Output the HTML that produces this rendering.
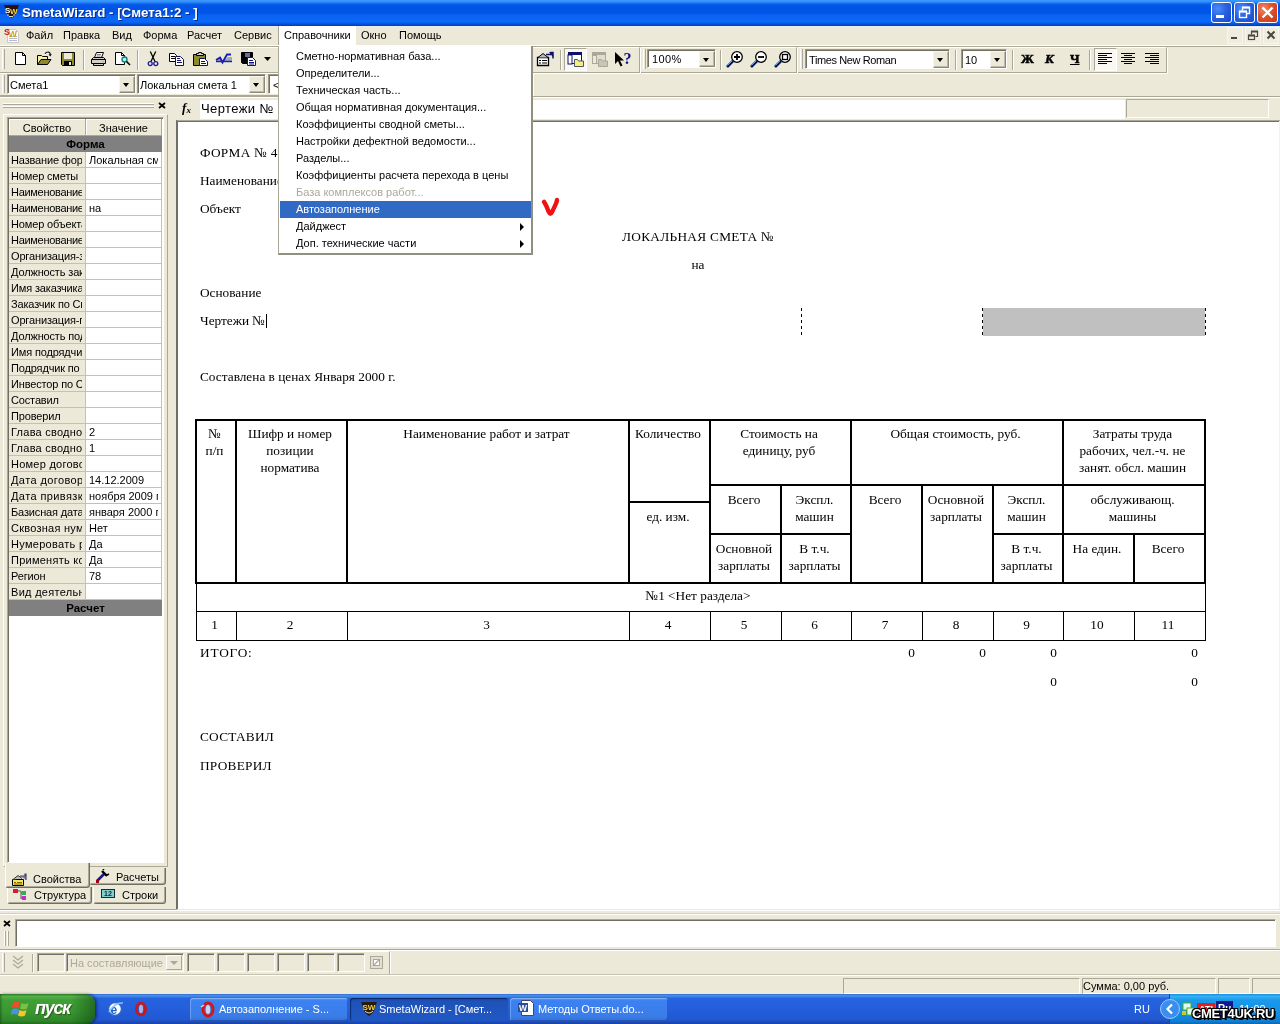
<!DOCTYPE html>
<html lang="ru">
<head>
<meta charset="utf-8">
<title>SmetaWizard - [Смета1:2 - ]</title>
<style>
*{box-sizing:border-box;margin:0;padding:0}
html,body{width:1280px;height:1024px;overflow:hidden;background:#ece9d8}
body{position:relative;will-change:transform;font:11px "Liberation Sans",sans-serif;color:#000}
.abs{position:absolute}
.t{position:absolute;white-space:nowrap;line-height:13px}
/* title bar */
#title{left:0;top:0;width:1280px;height:26px;background:linear-gradient(to bottom,#3c9aff 0%,#2f8cfa 8%,#0c60ea 15%,#0055e6 24%,#0055e6 50%,#0a64f4 60%,#0b68f8 84%,#0752dc 92%,#003cb4 100%)}
#title .cap{left:22px;top:5px;font:bold 13.3px "Liberation Sans",sans-serif;color:#fff;text-shadow:1px 1px 0 #0a2a8a;line-height:16px}
/* menu bar */
#menubar{left:0;top:26px;width:1280px;height:20px;background:#ece9d8}
#menubar .t{top:3px}
/* toolbars */
.sep{position:absolute;width:2px;border-left:1px solid #aca899;border-right:1px solid #fff}
.combo{position:absolute;background:#fff;border:1px solid #9d9a8a;border-right-color:#fff;border-bottom-color:#fff;box-shadow:inset 1px 1px 0 #716f64}
.combo .btn{position:absolute;right:0;top:1px;bottom:0;width:16px;background:#ece9d8;border:1px solid #f6f5ee;border-right-color:#8a887a;border-bottom-color:#8a887a;box-shadow:inset -1px -1px 0 #bdb9a8}
.combo .btn:after{content:"";position:absolute;left:3px;top:6px;border:3.5px solid transparent;border-top:4px solid #000;border-bottom:0}
.combo .t{left:3px;top:3px}

.tb{border-top:1px solid #fff;border-bottom:1px solid #aca899;border-right:1px solid #aca899;box-shadow:1px 1px 0 #fff}
.grip{width:3px;border-left:1px solid #fff;border-right:1px solid #aca899;background:#ece9d8}
.ic{overflow:visible}

#grid{overflow:hidden;font-size:11px}
#grid div{position:absolute;white-space:nowrap;overflow:hidden}
.gcol{left:0;top:0;width:76px;height:497px;background:#ece9d8}
.gh{top:0;height:17px;line-height:18px;text-align:center;background:#ece9d8;border-right:1px solid #aca899;border-bottom:1px solid #aca899;box-shadow:inset 1px 1px 0 #fff}
.gs{left:0;width:153px;height:16px;line-height:16px;background:#808080;font-weight:bold;text-align:center;font-size:11.500px}
.gl{left:2px;width:71px;height:15px;line-height:17px;letter-spacing:-.15px}
.gr{left:80px;width:69px;height:15px;line-height:17px}
.hl{left:0;width:153px;height:1px;background:#c0c0c0}
.vl{top:33px;width:1px;height:448px;background:#c0c0c0}
.hl{left:0;width:153px;height:1px;background:#c0c0c0}
.vl{top:33px;width:1px;height:448px;background:#c0c0c0}
.hl{left:0;width:153px;height:1px;background:#c0c0c0}
.vl{top:33px;width:1px;height:448px;background:#c0c0c0}
.hl{left:0;width:153px;height:1px;background:#c0c0c0}
.vl{top:33px;width:1px;height:448px;background:#c0c0c0}
.hl{left:0;width:153px;height:1px;background:#c0c0c0}
.vl{top:33px;width:1px;height:448px;background:#c0c0c0}
.hl{left:0;width:153px;height:1px;background:#c0c0c0}
.vl{top:33px;width:1px;height:448px;background:#c0c0c0}
.hl{left:0;width:153px;height:1px;background:#c0c0c0}
.vl{top:33px;width:1px;height:448px;background:#c0c0c0}
.tab{background:#ece9d8;border:1px solid #fff;border-top:0;border-right:1px solid #716f64;border-bottom:1px solid #716f64;border-radius:0 0 3px 3px;box-shadow:inset -1px -1px 0 #aca899}
.tab.act{z-index:0}

.d{position:absolute;white-space:nowrap;font:13.300px "Liberation Serif",serif;line-height:16px;height:16px}
.d.c{text-align:center}
.d.r{text-align:right}
.ln{position:absolute;background:#000}

.mi{position:absolute;left:1px;width:251px;height:17px;line-height:17px;padding-left:16px;white-space:nowrap}
.mi.dis{color:#aca899}
.mi.sel{background:#316ac5;color:#fff}
.mi i{position:absolute;left:240px;top:5px;border:4px solid transparent;border-left:4px solid #000;border-right:0;height:0;width:0}

.sunk{position:absolute;border:1px solid #aca899;border-right-color:#fff;border-bottom-color:#fff;box-shadow:inset 1px 1px 0 #716f64}
.spn{position:absolute;top:978px;height:16px;border:1px solid #aca899;border-right-color:#fff;border-bottom-color:#fff}
#taskbar{background:linear-gradient(to bottom,#3168d5 0%,#4993e6 6%,#2663e0 14%,#245edb 50%,#2158d3 85%,#1941a5 100%)}
#start{background:linear-gradient(to right,rgba(0,40,0,.35) 0%,rgba(0,40,0,0) 3%,rgba(0,40,0,0) 75%,rgba(0,40,0,.4) 100%),linear-gradient(to bottom,#2c7a24 0%,#54b04a 8%,#40a036 20%,#399632 60%,#2f8629 90%,#246a20 100%);border-radius:0 9px 9px 0;box-shadow:2px 0 3px rgba(0,0,60,.5)}
.tbtn{position:absolute;top:4px;width:158px;height:23px;border-radius:3px;background:linear-gradient(to bottom,#5c9bf0 0%,#3c81f3 12%,#3a7de8 80%,#336fd6 100%);box-shadow:inset 1px 1px 0 rgba(255,255,255,.25),inset -1px -1px 0 rgba(0,0,60,.25)}
.tbtn.on{background:linear-gradient(to bottom,#1a45a8 0%,#1e52b7 15%,#2058c4 100%);box-shadow:inset 1px 1px 1px rgba(0,0,40,.5)}
#tray{background:linear-gradient(to bottom,#1a8ee0 0%,#35b0f5 8%,#1b9aeb 20%,#1290e6 60%,#0f80d4 90%,#0b66b0 100%);border-left:1px solid #0a4a9a}
#wm{font:bold 13px "Liberation Sans",sans-serif;color:#fff;line-height:16px;text-shadow:-1px -1px 0 #000,1px -1px 0 #000,-1px 1px 0 #000,1px 1px 0 #000,0 -1px 0 #000,0 1px 0 #000,-1px 0 0 #000,1px 0 0 #000,2px 2px 0 #000;letter-spacing:-.3px}

.wb{position:absolute;top:2px;width:21px;height:21px;border:1px solid #fff;border-radius:3px;background:radial-gradient(circle at 30% 30%,#4a8cf8 0%,#2a62e0 45%,#1a48c8 100%)}
.wb.cl{background:radial-gradient(circle at 30% 30%,#f08a6a 0%,#e0502a 45%,#c03a18 100%)}
.wb svg{display:block}
</style>
</head>
<body>
<!-- TITLE BAR -->
<div id="title" class="abs">
  <svg class="abs" style="left:4px;top:5px" width="15" height="13" viewBox="0 0 15 13"><path d="M0 0h15l-1.500 4q-.5 5-6 9q-5.500-4-6-9z" fill="#2a1208"/><text x="1" y="7.500" font-family="Liberation Sans,sans-serif" font-weight="bold" font-size="8" fill="#fff">S</text><text x="6" y="8.500" font-family="Liberation Sans,sans-serif" font-weight="bold" font-size="8" fill="#f2d648">W</text><path d="M3 10h2M9 10h2M5 11.500h4" stroke="#e8d8b0" stroke-width="1"/></svg>
  <div class="t cap">SmetaWizard - [Смета1:2 - ]</div>
  <div class="wb" style="left:1211px"><svg width="19" height="19" viewBox="0 0 19 19"><rect x="4" y="12" width="8" height="3" fill="#fff"/></svg></div>
  <div class="wb" style="left:1234px"><svg width="19" height="19" viewBox="0 0 19 19"><path d="M7.500 7.500v-3h7v6h-3" fill="none" stroke="#fff" stroke-width="1.400"/><path d="M7 4.500h8" stroke="#fff" stroke-width="2"/><rect x="4.500" y="8.500" width="7" height="6" fill="none" stroke="#fff" stroke-width="1.400"/><path d="M4 8.500h8" stroke="#fff" stroke-width="2"/></svg></div>
  <div class="wb cl" style="left:1257px"><svg width="19" height="19" viewBox="0 0 19 19"><path d="M4.500 4.500l10 10M14.500 4.500l-10 10" stroke="#fff" stroke-width="2.300"/></svg></div>
</div>
<!-- MENU BAR -->
<div id="menubar" class="abs">
  <div class="abs" style="left:0;top:0;width:1280px;height:1px;background:#e6ecfa"></div>
  <svg class="abs" style="left:4px;top:1px" width="16" height="17" viewBox="0 0 16 17"><path d="M3.500 2.500h8l3 3v10h-11z" fill="#fff" stroke="#c8c8d0"/><path d="M5 9.500h8M5 11.500h8M5 13.500h8" stroke="#b8b8c8"/><text x="0" y="8" font-family="Liberation Sans,sans-serif" font-weight="bold" font-size="9" fill="#c01818">S</text><text x="4.500" y="10" font-family="Liberation Sans,sans-serif" font-weight="bold" font-size="9" fill="#c8a818">W</text></svg>
  <svg class="abs" style="left:1227px;top:1px" width="52" height="17" viewBox="0 0 52 17"><rect x=".5" y=".5" width="15" height="16" fill="#efece0" stroke="#f7f6ef"/><rect x="18.500" y=".5" width="15" height="16" fill="#efece0" stroke="#f7f6ef"/><rect x="36.500" y=".5" width="15" height="16" fill="#efece0" stroke="#f7f6ef"/><path d="M4 11h6" stroke="#4a483c" stroke-width="2"/><path d="M24.500 7.500v-3h6v5h-2" fill="none" stroke="#4a483c" stroke-width="1.200"/><path d="M24 4.500h7" stroke="#4a483c" stroke-width="2"/><rect x="21.500" y="8.500" width="6" height="4" fill="none" stroke="#4a483c" stroke-width="1.200"/><path d="M21 8.500h7" stroke="#4a483c" stroke-width="2"/><path d="M40.500 4.500l7 7M47.500 4.500l-7 7" stroke="#4a483c" stroke-width="2"/></svg>
  <div class="t" style="left:26px">Файл</div>
  <div class="t" style="left:63px">Правка</div>
  <div class="t" style="left:112px">Вид</div>
  <div class="t" style="left:143px">Форма</div>
  <div class="t" style="left:187px">Расчет</div>
  <div class="t" style="left:234px">Сервис</div>
  <div class="abs" style="left:278px;top:0;width:78px;height:21px;background:#fff;border-left:1px solid #aca899"></div>
  <div class="t" style="left:284px">Справочники</div>
  <div class="t" style="left:361px">Окно</div>
  <div class="t" style="left:399px">Помощь</div>
</div>
<!--TOOLBARS-->
<!-- TOOLBAR ROW 1 -->
<div class="abs" style="left:0;top:45px;width:1280px;height:1px;background:#fff"></div>
<div class="abs" style="left:0;top:46px;width:1280px;height:1px;background:#aca899"></div>
<!-- toolbar 1 band -->
<div class="abs tb" style="left:0;top:47px;width:640px;height:26px"></div>
<div class="abs tb" style="left:641px;top:47px;width:156px;height:26px"></div>
<div class="abs tb" style="left:798px;top:47px;width:369px;height:26px"></div>
<div class="abs grip" style="left:2px;top:49px;height:20px"></div>
<div class="abs grip" style="left:643px;top:49px;height:20px"></div>
<div class="abs grip" style="left:800px;top:49px;height:20px"></div>
<div class="sep" style="left:83px;top:50px;height:20px"></div>
<div class="sep" style="left:137px;top:50px;height:20px"></div>
<div class="sep" style="left:560px;top:50px;height:20px"></div>
<div class="sep" style="left:720px;top:50px;height:20px"></div>
<div class="sep" style="left:955px;top:50px;height:20px"></div>
<div class="sep" style="left:1012px;top:50px;height:20px"></div>
<div class="sep" style="left:1089px;top:50px;height:20px"></div>

<!-- icons row 1 -->
<svg class="abs ic" style="left:13px;top:51px" width="16" height="16" viewBox="0 0 16 16"><path d="M2.5 1.5h7l3 3v9h-10z" fill="#fff" stroke="#000"/><path d="M9.5 1.5v3h3" fill="none" stroke="#000"/></svg>
<svg class="abs ic" style="left:36px;top:50px" width="16" height="16" viewBox="0 0 16 16"><path d="M1.5 14.5v-9h4l1 1h5v3" fill="#f5f0a0" stroke="#000"/><path d="M1.5 14.5l3.500-5h10l-3.500 5z" fill="#8c8a2c" stroke="#000"/><path d="M9 3.600q1.200-1.600 3-1.600q2.200 0 2.300 2.600" fill="none" stroke="#000" stroke-width="1.100"/><path d="M12.600 4.200h3.200l-1.600 2.200z" fill="#000"/></svg>
<svg class="abs ic" style="left:60px;top:51px" width="16" height="16" viewBox="0 0 16 16"><path d="M1.500 1.500h13v13h-12l-1-1z" fill="#8c8a2c" stroke="#000"/><rect x="4" y="2" width="8" height="6" fill="#ece9d8"/><rect x="4" y="10" width="8" height="4" fill="#000"/><rect x="9" y="11" width="2" height="3" fill="#ece9d8"/></svg>
<svg class="abs ic" style="left:90px;top:51px" width="17" height="16" viewBox="0 0 17 16"><path d="M4.500 6.500l2-5h7l-2 5" fill="#fff" stroke="#000"/><path d="M1.500 8.500l2-2h10l2 2v4h-2v2h-10v-2h-2z" fill="#d4d0c8" stroke="#000"/><path d="M1.500 8.500h14M3.500 12.500h10" stroke="#000" fill="none"/><path d="M7 3.500h4M6.500 5h4" stroke="#808080" fill="none"/><rect x="12" y="10" width="2" height="1" fill="#cc0"/></svg>
<svg class="abs ic" style="left:114px;top:51px" width="17" height="16" viewBox="0 0 17 16"><path d="M1.500 1.500h6l3 3v9h-9z" fill="#fff" stroke="#000"/><path d="M7.500 1.500v3h3" fill="none" stroke="#000"/><circle cx="10.500" cy="8.500" r="2.500" fill="#9fe" stroke="#1c7b7b" stroke-width="1.400"/><path d="M12.500 10.500l3.500 3.500" stroke="#000" stroke-width="1.600"/></svg>
<svg class="abs ic" style="left:146px;top:51px" width="14" height="16" viewBox="0 0 14 16"><path d="M4.300 .5l4.700 10M9.700 .5l-4.700 10" stroke="#000" fill="none" stroke-width="1.300"/><circle cx="4.200" cy="12.600" r="2" fill="none" stroke="#1a1a9a" stroke-width="1.300"/><circle cx="9.800" cy="12.600" r="2" fill="none" stroke="#1a1a9a" stroke-width="1.300"/></svg>
<svg class="abs ic" style="left:168px;top:51px" width="17" height="16" viewBox="0 0 17 16"><path d="M1.500 2.500h5l2 2v6h-7z" fill="#fff" stroke="#000"/><path d="M3 5.500h4M3 7.500h4" stroke="#000"/><path d="M7.500 5.500h5l3 3v6h-8z" fill="#fff" stroke="#101060"/><path d="M9 9.500h4M9 11.500h5M9 7.500h3" stroke="#101060"/></svg>
<svg class="abs ic" style="left:192px;top:51px" width="17" height="16" viewBox="0 0 17 16"><path d="M1.500 3.500h12v11h-12z" fill="#8c8a2c" stroke="#000"/><path d="M4.500 4.500v-2h2v-1h3v1h2v2z" fill="#d4d0c8" stroke="#000"/><path d="M7.500 7.500h5l3 3v4h-8z" fill="#fff" stroke="#101060"/><path d="M9 10.500h4M9 12.500h5" stroke="#101060"/></svg>
<svg class="abs ic" style="left:215px;top:51px" width="18" height="16" viewBox="0 0 18 16"><path d="M1 9l5-3 2 4 5-4h4v4h-16z" fill="#9ab" stroke="none"/><path d="M1 9l4-2.500 2.500 5 4.500-8h4" fill="none" stroke="#1c1cb0" stroke-width="1.800"/><path d="M1 10.500h16" stroke="#1c1cb0" stroke-width="1.400"/></svg>
<svg class="abs ic" style="left:240px;top:51px" width="17" height="16" viewBox="0 0 17 16"><path d="M1.500 1.500h11v11h-10l-1-1z" fill="#000" stroke="#000"/><rect x="5" y="2" width="5" height="4" fill="#6a6a9a"/><path d="M7.500 6.500h5l3 3v5h-8z" fill="#fff" stroke="#101080"/><path d="M9 9.500h4M9 11.500h5M9 13h5" stroke="#101080"/></svg>
<svg class="abs ic" style="left:264px;top:57px" width="7" height="4" viewBox="0 0 7 4"><path d="M0 0h7l-3.500 4z" fill="#000"/></svg>
<!-- right of menu -->
<svg class="abs ic" style="left:536px;top:51px" width="18" height="16" viewBox="0 0 18 16"><path d="M1.500 6.500h11v8h-11z" fill="#fff" stroke="#000" stroke-width="1.300"/><path d="M3 9.500h2M6 9.500h5M3 12h2M6 12h5" stroke="#000" stroke-width="1.200"/><path d="M2 6.500l5-4 5 4" fill="#bbb" stroke="#000"/><path d="M10 3.500h5v-2l2 0v6" fill="none" stroke="#10106a" stroke-width="1.500"/><path d="M13 1l4-0v5z" fill="#10106a"/></svg>
<div class="abs" style="left:564px;top:48px;width:23px;height:23px;background:#f8f7f1;border:1px solid #aca899;border-right-color:#fff;border-bottom-color:#fff"></div>
<svg class="abs ic" style="left:568px;top:52px" width="17" height="16" viewBox="0 0 17 16"><rect x="0.500" y="0.500" width="13" height="11" fill="#fff" stroke="#10106a"/><rect x="0" y="0" width="14" height="3" fill="#10106a"/><rect x="0" y="3" width="4" height="9" fill="#fff" stroke="#10106a"/><path d="M6.500 14.500v-7h3l1 1.500h5v5.500z" fill="#f4ee88" stroke="#555"/></svg>
<svg class="abs ic" style="left:592px;top:52px" width="17" height="16" viewBox="0 0 17 16"><rect x="0.500" y="0.500" width="13" height="11" fill="#e0ddd0" stroke="#aca899"/><rect x="0" y="0" width="14" height="3" fill="#aca899"/><rect x="0.500" y="3.500" width="4" height="8" fill="#ece9d8" stroke="#aca899"/><path d="M6.500 14.500v-7h3l1 1.500h5v5.500z" fill="#c9c6b8" stroke="#aca899"/></svg>
<svg class="abs ic" style="left:614px;top:51px" width="19" height="17" viewBox="0 0 19 17"><path d="M1 1v12l3-3 2.500 5.500 2-1-2.500-5h4z" fill="#000"/><text x="9.500" y="13" font-family="Liberation Serif,serif" font-weight="bold" font-size="16" fill="#10107a">?</text></svg>
<!-- zoom combo -->
<div class="combo" style="left:647px;top:49px;width:69px;height:19px"><div class="t" style="left:4px;letter-spacing:.4px">100%</div><div class="btn"></div></div>
<!-- zoom icons -->
<svg class="abs ic" style="left:726px;top:50px" width="18" height="18" viewBox="0 0 18 18"><path d="M1 17l6-6" stroke="#10104a" stroke-width="2.600"/><path d="M1.500 15.500l5-5" stroke="#5aa0e8" stroke-width="1"/><circle cx="11" cy="7" r="5.300" fill="#fff" stroke="#000" stroke-width="1.300"/><path d="M8 7h6M11 4v6" stroke="#000" stroke-width="1.800"/></svg>
<svg class="abs ic" style="left:750px;top:50px" width="18" height="18" viewBox="0 0 18 18"><path d="M1 17l6-6" stroke="#10104a" stroke-width="2.600"/><path d="M1.500 15.500l5-5" stroke="#5aa0e8" stroke-width="1"/><circle cx="11" cy="7" r="5.300" fill="#fff" stroke="#000" stroke-width="1.300"/><path d="M8 7h6" stroke="#000" stroke-width="1.800"/></svg>
<svg class="abs ic" style="left:774px;top:50px" width="18" height="18" viewBox="0 0 18 18"><path d="M1 17l6-6" stroke="#10104a" stroke-width="2.600"/><path d="M1.500 15.500l5-5" stroke="#5aa0e8" stroke-width="1"/><circle cx="11" cy="7" r="5.300" fill="#fff" stroke="#000" stroke-width="1.300"/><rect x="8.500" y="4.500" width="5" height="5" fill="none" stroke="#000" stroke-width="1.300"/></svg>
<!-- font combos -->
<div class="combo" style="left:805px;top:49px;width:145px;height:20px"><div class="t" style="top:4px;letter-spacing:-.4px">Times New Roman</div><div class="btn"></div></div>
<div class="combo" style="left:961px;top:49px;width:46px;height:20px"><div class="t" style="top:4px">10</div><div class="btn"></div></div>
<div class="t" style="left:1021px;top:51px;font:bold 13px 'Liberation Serif',serif;-webkit-text-stroke:.5px #000">Ж</div>
<div class="t" style="left:1045px;top:51px;font:italic bold 13px 'Liberation Serif',serif;-webkit-text-stroke:.5px #000">К</div>
<div class="t" style="left:1070px;top:51px;font:bold 13px 'Liberation Serif',serif;-webkit-text-stroke:.5px #000;text-decoration:underline">Ч</div>
<div class="abs" style="left:1094px;top:48px;width:23px;height:23px;background:#f8f7f1;border:1px solid #aca899;border-right-color:#fff;border-bottom-color:#fff"></div>
<svg class="abs ic" style="left:1098px;top:53px" width="14" height="13" viewBox="0 0 14 13"><path d="M0 .5h14M0 2.500h9M0 4.500h14M0 6.500h9M0 8.500h14M0 10.500h9" stroke="#000"/></svg>
<svg class="abs ic" style="left:1121px;top:53px" width="14" height="13" viewBox="0 0 14 13"><path d="M0 .5h14M3 2.500h8M0 4.500h14M3 6.500h8M0 8.500h14M3 10.500h8" stroke="#000"/></svg>
<svg class="abs ic" style="left:1145px;top:53px" width="14" height="13" viewBox="0 0 14 13"><path d="M0 .5h14M5 2.500h9M0 4.500h14M5 6.500h9M0 8.500h14M5 10.500h9" stroke="#000"/></svg>

<!-- TOOLBAR ROW 2 -->
<div class="abs tb" style="left:0;top:73px;width:533px;height:23px"></div>
<div class="abs grip" style="left:2px;top:75px;height:18px"></div>
<div class="combo" style="left:7px;top:74px;width:129px;height:20px"><div class="t" style="top:4px;left:2px">Смета1</div><div class="btn"></div></div>
<div class="combo" style="left:137px;top:74px;width:129px;height:20px"><div class="t" style="top:4px;left:2px">Локальная смета 1</div><div class="btn"></div></div>
<div class="combo" style="left:268px;top:74px;width:129px;height:20px"><div class="t" style="left:4px;top:4px">&lt;</div></div>
<div class="abs" style="left:0;top:96px;width:1280px;height:1px;background:#aca899"></div>
<div class="abs" style="left:0;top:97px;width:1280px;height:1px;background:#fff"></div>
<!--/TOOLBARS-->
<!--LEFTPANEL-->
<!-- LEFT PANEL -->
<div class="abs" style="left:3px;top:103px;width:151px;height:2px;border-top:1px solid #fff;border-bottom:1px solid #aca899"></div>
<div class="abs" style="left:3px;top:106px;width:151px;height:2px;border-top:1px solid #fff;border-bottom:1px solid #aca899"></div>
<svg class="abs" style="left:158px;top:102px" width="8" height="7" viewBox="0 0 8 7"><path d="M1 1l6 5M7 1l-6 5" stroke="#000" stroke-width="1.700"/></svg>
<div class="abs" style="left:3px;top:114px;width:165px;height:753px;border:1px solid #fff;border-right-color:#aca899;border-bottom-color:#aca899"></div>
<div class="abs" style="left:7px;top:117px;width:157px;height:746px;background:#fff;border:1px solid #aca899;border-right-color:#fff;border-bottom-color:#fff;box-shadow:inset 1px 1px 0 #716f64"></div>
<div class="abs" id="grid" style="left:9px;top:119px;width:153px;height:497px">
 <div class="gcol"></div>
 <div class="gh" style="left:0;width:77px">Свойство</div><div class="gh" style="left:77px;width:76px">Значение</div>
 <div class="gs" style="top:17px">Форма</div>
 <div class="gl" style="top:33px">Название формы</div><div class="gr" style="top:33px">Локальная смета</div><div class="hl" style="top:48px"></div>
 <div class="gl" style="top:49px">Номер сметы</div><div class="gr" style="top:49px"></div><div class="hl" style="top:64px"></div>
 <div class="gl" style="top:65px;letter-spacing:-0.3px">Наименование стройки</div><div class="gr" style="top:65px"></div><div class="hl" style="top:80px"></div>
 <div class="gl" style="top:81px;letter-spacing:-0.3px">Наименование объекта</div><div class="gr" style="top:81px">на</div><div class="hl" style="top:96px"></div>
 <div class="gl" style="top:97px">Номер объекта</div><div class="gr" style="top:97px"></div><div class="hl" style="top:112px"></div>
 <div class="gl" style="top:113px;letter-spacing:-0.3px">Наименование работ</div><div class="gr" style="top:113px"></div><div class="hl" style="top:128px"></div>
 <div class="gl" style="top:129px">Организация-заказчик</div><div class="gr" style="top:129px"></div><div class="hl" style="top:144px"></div>
 <div class="gl" style="top:145px">Должность заказчика</div><div class="gr" style="top:145px"></div><div class="hl" style="top:160px"></div>
 <div class="gl" style="top:161px">Имя заказчика</div><div class="gr" style="top:161px"></div><div class="hl" style="top:176px"></div>
 <div class="gl" style="top:177px">Заказчик по Смете</div><div class="gr" style="top:177px"></div><div class="hl" style="top:192px"></div>
 <div class="gl" style="top:193px">Организация-подрядчик</div><div class="gr" style="top:193px"></div><div class="hl" style="top:208px"></div>
 <div class="gl" style="top:209px">Должность подрядчика</div><div class="gr" style="top:209px"></div><div class="hl" style="top:224px"></div>
 <div class="gl" style="top:225px">Имя подрядчика</div><div class="gr" style="top:225px"></div><div class="hl" style="top:240px"></div>
 <div class="gl" style="top:241px">Подрядчик по Смете</div><div class="gr" style="top:241px"></div><div class="hl" style="top:256px"></div>
 <div class="gl" style="top:257px">Инвестор по Смете</div><div class="gr" style="top:257px"></div><div class="hl" style="top:272px"></div>
 <div class="gl" style="top:273px">Составил</div><div class="gr" style="top:273px"></div><div class="hl" style="top:288px"></div>
 <div class="gl" style="top:289px">Проверил</div><div class="gr" style="top:289px"></div><div class="hl" style="top:304px"></div>
 <div class="gl" style="top:305px;letter-spacing:0.25px">Глава сводного расчета</div><div class="gr" style="top:305px">2</div><div class="hl" style="top:320px"></div>
 <div class="gl" style="top:321px;letter-spacing:0.25px">Глава сводного расчета</div><div class="gr" style="top:321px">1</div><div class="hl" style="top:336px"></div>
 <div class="gl" style="top:337px;letter-spacing:0.25px">Номер договора</div><div class="gr" style="top:337px"></div><div class="hl" style="top:352px"></div>
 <div class="gl" style="top:353px;letter-spacing:0.4px">Дата договора</div><div class="gr" style="top:353px">14.12.2009</div><div class="hl" style="top:368px"></div>
 <div class="gl" style="top:369px;letter-spacing:0.4px">Дата привязки</div><div class="gr" style="top:369px">ноября 2009 г.</div><div class="hl" style="top:384px"></div>
 <div class="gl" style="top:385px">Базисная дата</div><div class="gr" style="top:385px">января 2000 г.</div><div class="hl" style="top:400px"></div>
 <div class="gl" style="top:401px;letter-spacing:0.25px">Сквозная нумерация</div><div class="gr" style="top:401px">Нет</div><div class="hl" style="top:416px"></div>
 <div class="gl" style="top:417px;letter-spacing:0.3px">Нумеровать разделы</div><div class="gr" style="top:417px">Да</div><div class="hl" style="top:432px"></div>
 <div class="gl" style="top:433px;letter-spacing:0.25px">Применять коэффициенты</div><div class="gr" style="top:433px">Да</div><div class="hl" style="top:448px"></div>
 <div class="gl" style="top:449px">Регион</div><div class="gr" style="top:449px">78</div><div class="hl" style="top:464px"></div>
 <div class="gl" style="top:465px;letter-spacing:0.3px">Вид деятельности</div><div class="gr" style="top:465px"></div><div class="hl" style="top:480px"></div>
 <div class="gs" style="top:481px">Расчет</div>
 <div class="vl" style="left:76px"></div><div class="vl" style="left:152px"></div>
</div>
<div class="abs tab" style="left:89px;top:868px;width:77px;height:17px"></div>
<div class="abs tab" style="left:7px;top:887px;width:85px;height:17px"></div>
<div class="abs tab" style="left:93px;top:887px;width:73px;height:17px"></div>
<div class="abs tab act" style="left:5px;top:863px;width:85px;height:25px;border-top:0"></div>
<div class="t" style="left:33px;top:873px">Свойства</div>
<div class="t" style="left:116px;top:871px">Расчеты</div>
<div class="t" style="left:34px;top:889px">Структура</div>
<div class="t" style="left:122px;top:889px">Строки</div>
<svg class="abs" style="left:11px;top:873px" width="16" height="14" viewBox="0 0 16 14"><path d="M1.500 6.500h11v6h-11z" fill="#f2e860" stroke="#000"/><path d="M3 9.500h2M6 9.500h5M3 11h8" stroke="#7a6a00"/><path d="M2 6.500l5-4 4 3" fill="#bbb" stroke="#333"/><path d="M9 3h5v-2l1 0v6" fill="#88a" stroke="#446" stroke-width="1.200"/></svg>
<svg class="abs" style="left:95px;top:869px" width="16" height="14" viewBox="0 0 16 14"><path d="M2 12l8-8" stroke="#1c1a80" stroke-width="2.600"/><path d="M7 2l5 5" stroke="#000" stroke-width="2.400"/><path d="M8 1l1 -1M12 6l2 -1" stroke="#000" stroke-width="1.500"/><rect x="1" y="11" width="3" height="3" fill="#a00018"/></svg>
<svg class="abs" style="left:13px;top:888px" width="15" height="14" viewBox="0 0 15 14"><path d="M4 3h4v8M8 5h2M8 10h2" fill="none" stroke="#555"/><rect x="0" y="1" width="5" height="4" fill="#d02030"/><rect x="9" y="3" width="4" height="4" fill="#30b050"/><rect x="9" y="8" width="4" height="4" fill="#c030c0"/></svg>
<svg class="abs" style="left:101px;top:889px" width="14" height="9" viewBox="0 0 14 9"><rect x=".5" y=".5" width="13" height="8" fill="#7fd0d0" stroke="#1a2a2a"/><text x="3" y="7" font-size="7" font-weight="bold" font-family="Liberation Sans,sans-serif" fill="#123">12</text></svg>
<div class="abs" style="left:0;top:98px;width:177px;height:812px;border-bottom:1px solid #aca899"></div>
<!--DOC-->
<!-- FORMULA BAR -->
<svg class="abs" style="left:182px;top:102px" width="12" height="13" viewBox="0 0 12 13"><text x="0" y="10" font-family="Liberation Serif,serif" font-style="italic" font-weight="bold" font-size="13" fill="#000">f</text><text x="4.500" y="10.500" font-family="Liberation Serif,serif" font-weight="bold" font-style="italic" font-size="9" fill="#000">x</text></svg>
<div class="abs" style="left:200px;top:100px;width:925px;height:19px;background:#fff"></div>
<div class="t" style="left:201px;top:101px;font-size:13px;line-height:16px;letter-spacing:.4px">Чертежи №</div>
<div class="abs" style="left:1126px;top:99px;width:143px;height:19px;border:1px solid #aca899;border-right-color:#fff;border-bottom-color:#fff"></div>
<!-- DOCUMENT -->
<div class="abs" id="doc" style="left:176px;top:120px;width:1104px;height:789px;background:#fff;border-left:2px solid #716f64;border-top:1px solid #aca899;box-shadow:inset -1px 0 0 #f2f2f2,inset 0 1px 0 #716f64"></div>
<div class="d" style="left:200px;top:145px;letter-spacing:.3px">ФОРМА № 4</div>
<div class="d" style="left:200px;top:173px">Наименование стройки</div>
<div class="d" style="left:200px;top:201px">Объект</div>
<div class="d c" style="left:548px;width:300px;top:229px"><span style="letter-spacing:.3px">ЛОКАЛЬНАЯ СМЕТА №</span></div>
<div class="d c" style="left:548px;width:300px;top:257px">на</div>
<div class="d" style="left:200px;top:285px">Основание</div>
<div class="d" style="left:200px;top:313px">Чертежи №</div>
<div class="abs" style="left:266px;top:314px;width:1px;height:14px;background:#000"></div>
<div class="abs" style="left:983px;top:308px;width:222px;height:28px;background:#c0c0c0"></div>
<div class="abs" style="left:801px;top:308px;width:1px;height:27px;background:repeating-linear-gradient(to bottom,#000 0,#000 3px,transparent 3px,transparent 6px)"></div>
<div class="abs" style="left:982px;top:308px;width:1px;height:27px;background:repeating-linear-gradient(to bottom,#000 0,#000 3px,transparent 3px,transparent 6px)"></div>
<div class="abs" style="left:1205px;top:308px;width:1px;height:27px;background:repeating-linear-gradient(to bottom,#000 0,#000 3px,transparent 3px,transparent 6px)"></div>
<div class="d" style="left:200px;top:369px">Составлена в ценах Января 2000 г.</div>
<div class="ln" style="left:195px;top:419px;width:1011px;height:2px"></div>
<div class="ln" style="left:195px;top:582px;width:1011px;height:2px"></div>
<div class="ln" style="left:195px;top:419px;width:2px;height:165px"></div>
<div class="ln" style="left:235px;top:419px;width:2px;height:165px"></div>
<div class="ln" style="left:346px;top:419px;width:2px;height:165px"></div>
<div class="ln" style="left:628px;top:419px;width:2px;height:165px"></div>
<div class="ln" style="left:709px;top:419px;width:2px;height:165px"></div>
<div class="ln" style="left:850px;top:419px;width:2px;height:165px"></div>
<div class="ln" style="left:1062px;top:419px;width:2px;height:165px"></div>
<div class="ln" style="left:1204px;top:419px;width:2px;height:165px"></div>
<div class="ln" style="left:710px;top:484px;width:496px;height:2px"></div>
<div class="ln" style="left:629px;top:501px;width:81px;height:2px"></div>
<div class="ln" style="left:780px;top:485px;width:2px;height:98px"></div>
<div class="ln" style="left:921px;top:485px;width:2px;height:98px"></div>
<div class="ln" style="left:992px;top:485px;width:2px;height:98px"></div>
<div class="ln" style="left:1133px;top:534px;width:2px;height:49px"></div>
<div class="ln" style="left:710px;top:533px;width:141px;height:2px"></div>
<div class="ln" style="left:993px;top:533px;width:213px;height:2px"></div>
<div class="ln" style="left:196px;top:583px;width:1px;height:58px"></div>
<div class="ln" style="left:1205px;top:583px;width:1px;height:58px"></div>
<div class="ln" style="left:196px;top:611px;width:1010px;height:1px"></div>
<div class="ln" style="left:196px;top:640px;width:1010px;height:1px"></div>
<div class="ln" style="left:236px;top:611px;width:1px;height:29px"></div>
<div class="ln" style="left:347px;top:611px;width:1px;height:29px"></div>
<div class="ln" style="left:629px;top:611px;width:1px;height:29px"></div>
<div class="ln" style="left:710px;top:611px;width:1px;height:29px"></div>
<div class="ln" style="left:781px;top:611px;width:1px;height:29px"></div>
<div class="ln" style="left:851px;top:611px;width:1px;height:29px"></div>
<div class="ln" style="left:922px;top:611px;width:1px;height:29px"></div>
<div class="ln" style="left:993px;top:611px;width:1px;height:29px"></div>
<div class="ln" style="left:1063px;top:611px;width:1px;height:29px"></div>
<div class="ln" style="left:1134px;top:611px;width:1px;height:29px"></div>
<div class="d c" style="left:194.5px;width:40px;top:426px">№</div>
<div class="d c" style="left:194.5px;width:40px;top:443px">п/п</div>
<div class="d c" style="left:234.5px;width:111px;top:426px">Шифр и номер</div>
<div class="d c" style="left:234.5px;width:111px;top:443px">позиции</div>
<div class="d c" style="left:234.5px;width:111px;top:460px">норматива</div>
<div class="d c" style="left:345.5px;width:282px;top:426px">Наименование работ и затрат</div>
<div class="d c" style="left:627.5px;width:81px;top:426px">Количество</div>
<div class="d c" style="left:627.5px;width:81px;top:509px">ед. изм.</div>
<div class="d c" style="left:708.5px;width:141px;top:426px">Стоимость на</div>
<div class="d c" style="left:708.5px;width:141px;top:443px">единицу, руб</div>
<div class="d c" style="left:849.5px;width:212px;top:426px">Общая стоимость, руб.</div>
<div class="d c" style="left:1061.5px;width:142px;top:426px">Затраты труда</div>
<div class="d c" style="left:1061.5px;width:142px;top:443px">рабочих, чел.-ч. не</div>
<div class="d c" style="left:1061.5px;width:142px;top:460px">занят. обсл. машин</div>
<div class="d c" style="left:708.5px;width:71px;top:492px">Всего</div>
<div class="d c" style="left:779.5px;width:70px;top:492px">Экспл.</div>
<div class="d c" style="left:779.5px;width:70px;top:509px">машин</div>
<div class="d c" style="left:849.5px;width:71px;top:492px">Всего</div>
<div class="d c" style="left:920.5px;width:71px;top:492px">Основной</div>
<div class="d c" style="left:920.5px;width:71px;top:509px">зарплаты</div>
<div class="d c" style="left:991.5px;width:70px;top:492px">Экспл.</div>
<div class="d c" style="left:991.5px;width:70px;top:509px">машин</div>
<div class="d c" style="left:1061.5px;width:142px;top:492px">обслуживающ.</div>
<div class="d c" style="left:1061.5px;width:142px;top:509px">машины</div>
<div class="d c" style="left:708.5px;width:71px;top:541px">Основной</div>
<div class="d c" style="left:708.5px;width:71px;top:558px">зарплаты</div>
<div class="d c" style="left:779.5px;width:70px;top:541px">В т.ч.</div>
<div class="d c" style="left:779.5px;width:70px;top:558px">зарплаты</div>
<div class="d c" style="left:991.5px;width:70px;top:541px">В т.ч.</div>
<div class="d c" style="left:991.5px;width:70px;top:558px">зарплаты</div>
<div class="d c" style="left:1061.5px;width:71px;top:541px">На един.</div>
<div class="d c" style="left:1132.5px;width:71px;top:541px">Всего</div>
<div class="d c" style="left:548px;width:300px;top:588px">№1 &lt;Нет раздела&gt;</div>
<div class="d c" style="left:194.5px;width:40px;top:617px">1</div>
<div class="d c" style="left:234.5px;width:111px;top:617px">2</div>
<div class="d c" style="left:345.5px;width:282px;top:617px">3</div>
<div class="d c" style="left:627.5px;width:81px;top:617px">4</div>
<div class="d c" style="left:708.5px;width:71px;top:617px">5</div>
<div class="d c" style="left:779.5px;width:70px;top:617px">6</div>
<div class="d c" style="left:849.5px;width:71px;top:617px">7</div>
<div class="d c" style="left:920.5px;width:71px;top:617px">8</div>
<div class="d c" style="left:991.5px;width:70px;top:617px">9</div>
<div class="d c" style="left:1061.5px;width:71px;top:617px">10</div>
<div class="d c" style="left:1132.5px;width:71px;top:617px">11</div>
<div class="d" style="left:200px;top:645px;letter-spacing:.8px">ИТОГО:</div>
<div class="d r" style="left:815px;width:100px;top:645px">0</div>
<div class="d r" style="left:886px;width:100px;top:645px">0</div>
<div class="d r" style="left:957px;width:100px;top:645px">0</div>
<div class="d r" style="left:1098px;width:100px;top:645px">0</div>
<div class="d r" style="left:957px;width:100px;top:674px">0</div>
<div class="d r" style="left:1098px;width:100px;top:674px">0</div>
<div class="d" style="left:200px;top:729px;letter-spacing:.25px">СОСТАВИЛ</div>
<div class="d" style="left:200px;top:758px;letter-spacing:.25px">ПРОВЕРИЛ</div>
<svg class="abs" style="left:538px;top:194px" width="24" height="26" viewBox="0 0 24 26"><path d="M6 7.800Q8.500 11.500 10.800 18Q12.300 21.500 14 18Q16.500 13 18 9.500Q18.800 7.500 19 6" fill="none" stroke="#ee1212" stroke-width="4.400" stroke-linecap="round" stroke-linejoin="round"/></svg>
<!--MENU-->
<div class="abs" id="menu" style="left:278px;top:46px;width:255px;height:209px;background:#fff;border-left:1px solid #aca899;border-right:2px solid #918f80;border-bottom:2px solid #918f80">
 <div class="mi" style="top:2px">Сметно-нормативная база...</div>
 <div class="mi" style="top:19px">Определители...</div>
 <div class="mi" style="top:36px">Техническая часть...</div>
 <div class="mi" style="top:53px">Общая нормативная документация...</div>
 <div class="mi" style="top:70px">Коэффициенты сводной сметы...</div>
 <div class="mi" style="top:87px">Настройки дефектной ведомости...</div>
 <div class="mi" style="top:104px">Разделы...</div>
 <div class="mi" style="top:121px">Коэффициенты расчета перехода в цены</div>
 <div class="mi dis" style="top:138px">База комплексов работ...</div>
 <div class="mi sel" style="top:155px">Автозаполнение</div>
 <div class="mi" style="top:172px">Дайджест<i></i></div>
 <div class="mi" style="top:189px">Доп. технические части<i></i></div>
</div>
<!--BOTTOM-->
<!-- BOTTOM PANEL -->
<div class="abs" style="left:0;top:910px;width:1280px;height:1px;background:#fff"></div>
<div class="abs" style="left:0;top:913px;width:1280px;height:1px;background:#d4d0c8"></div>
<div class="abs" style="left:0;top:914px;width:1280px;height:1px;background:#fff"></div>
<svg class="abs" style="left:3px;top:920px" width="8" height="7" viewBox="0 0 8 7"><path d="M1 1l6 5M7 1l-6 5" stroke="#000" stroke-width="1.700"/></svg>
<div class="abs" style="left:4px;top:931px;width:2px;height:15px;border-left:1px solid #fff;border-right:1px solid #aca899"></div>
<div class="abs" style="left:7px;top:931px;width:2px;height:15px;border-left:1px solid #fff;border-right:1px solid #aca899"></div>
<div class="abs" style="left:15px;top:919px;width:1261px;height:28px;background:#fff;border:1px solid #aca899;border-right-color:#fff;border-bottom-color:#fff;box-shadow:inset 1px 1px 0 #716f64"></div>
<div class="abs" style="left:0;top:949px;width:1280px;height:1px;background:#aca899"></div>
<div class="abs" style="left:0;top:950px;width:1280px;height:1px;background:#fff"></div>
<!-- bottom toolbar -->
<div class="abs tb" style="left:0;top:951px;width:390px;height:24px"></div>
<div class="abs grip" style="left:2px;top:953px;height:19px"></div>
<svg class="abs" style="left:12px;top:955px" width="12" height="14" viewBox="0 0 12 14"><path d="M1 1l5 4 5-4M1 5l5 4 5-4M1 9l5 4 5-4" fill="none" stroke="#aca899" stroke-width="1.300"/></svg>
<div class="sep" style="left:32px;top:954px;height:18px"></div>
<div class="sunk" style="left:37px;top:953px;width:28px;height:19px"></div>
<div class="sunk" style="left:66px;top:953px;width:118px;height:19px"><div class="t" style="left:3px;top:3px;color:#aca899;font-size:11px">На составляющие</div><div class="abs" style="right:1px;top:1px;bottom:1px;width:16px;border:1px solid #fff;border-right-color:#aca899;border-bottom-color:#aca899"><div class="abs" style="left:3px;top:5px;border:4px solid transparent;border-top:4px solid #aca899;border-bottom:0"></div></div></div>
<div class="sunk" style="left:187px;top:953px;width:28px;height:19px"></div>
<div class="sunk" style="left:217px;top:953px;width:28px;height:19px"></div>
<div class="sunk" style="left:247px;top:953px;width:28px;height:19px"></div>
<div class="sunk" style="left:277px;top:953px;width:28px;height:19px"></div>
<div class="sunk" style="left:307px;top:953px;width:28px;height:19px"></div>
<div class="sunk" style="left:337px;top:953px;width:28px;height:19px"></div>
<svg class="abs" style="left:370px;top:956px" width="13" height="13" viewBox="0 0 13 13"><rect x=".5" y=".5" width="12" height="12" fill="#e4e0d0" stroke="#aca899"/><rect x="3.500" y="3.500" width="6" height="6" fill="#fff" stroke="#aca899"/><path d="M3 10l7-7" stroke="#aca899" stroke-width="1.300"/></svg>
<div class="abs" style="left:0;top:974px;width:1280px;height:1px;background:#c5c2b2"></div>
<!-- status bar -->
<div class="abs" style="left:0;top:975px;width:1280px;height:1px;background:#fff"></div>
<div class="spn" style="left:843px;width:237px"></div>
<div class="spn" style="left:1082px;width:134px"><div class="t" style="left:0;top:1px">Сумма: 0,00 руб.</div></div>
<div class="spn" style="left:1218px;width:32px"></div>
<div class="spn" style="left:1252px;width:30px"></div>
<!-- TASKBAR -->
<div class="abs" id="taskbar" style="left:0;top:994px;width:1280px;height:30px">
 <div class="abs" id="start" style="left:0;top:0;width:95px;height:30px"></div>
 <svg class="abs" style="left:11px;top:6px" width="20" height="18" viewBox="0 0 20 18"><path d="M2 2.500q3.500-2 7 0l-1.500 5.500q-3.500-2-7 0z" fill="#e8502a"/><path d="M10.500 3q3.500 2 7 0l-1.500 5.500q-3.500 2-7 0z" fill="#7cc242"/><path d="M0 9.500q3.500-2 7 0l-1.500 5.500q-3.500-2-7 0z" fill="#4a8fe8" transform="translate(1,0)"/><path d="M8.500 10q3.500 2 7 0l-1.500 5.500q-3.500 2-7 0z" fill="#f6c52c"/></svg>
 <div class="t" style="left:35px;top:3px;font:italic bold 18px 'Liberation Sans',sans-serif;line-height:22px;color:#fff;text-shadow:1px 1px 1px #2a5a1a;letter-spacing:-1.300px">пуск</div>
 <svg class="abs" style="left:107px;top:6px" width="17" height="17" viewBox="0 0 17 17"><circle cx="8" cy="9" r="6.500" fill="#fff" stroke="#2a6ad0" stroke-width="1.500"/><text x="3.500" y="13.500" font-family="Liberation Sans,sans-serif" font-weight="bold" font-size="12" fill="#1c5ac8">e</text><path d="M2 12q6-10 14-9" fill="none" stroke="#8ac0f8" stroke-width="1.500"/></svg>
 <svg class="abs" style="left:134px;top:7px" width="14" height="16" viewBox="0 0 14 16"><ellipse cx="7" cy="8" rx="4.600" ry="5.800" fill="none" stroke="#c81818" stroke-width="2.800"/><ellipse cx="7" cy="8" rx="2" ry="4.200" fill="#e8d8e0" opacity=".7"/></svg>
 <div class="tbtn " style="left:190px"></div>
 <svg class="abs" style="left:200px;top:7px" width="16" height="17" viewBox="0 0 16 17"><ellipse cx="8" cy="8.500" rx="5" ry="6.500" fill="none" stroke="#d01818" stroke-width="3"/><ellipse cx="8" cy="8.500" rx="2.200" ry="4.600" fill="#f4e8e8" opacity=".8"/><path d="M1 6l3-2" stroke="#ddd" stroke-width="1.500"/></svg>
 <div class="t" style="left:219px;top:9px;color:#fff">Автозаполнение - S...</div>
 <div class="tbtn on" style="left:350px"></div>
 <svg class="abs" style="left:361px;top:8px" width="16" height="14" viewBox="0 0 16 14"><path d="M0 0h16l-2 5q-1 6-6 9q-5-3-6-9z" fill="#2a1a0a"/><text x="1.500" y="8" font-family="Liberation Sans,sans-serif" font-weight="bold" font-size="8" fill="#f0d040">SW</text><path d="M4 9q4 4 8 0" stroke="#e8e0c0" fill="none"/></svg>
 <div class="t" style="left:379px;top:9px;color:#fff">SmetaWizard - [Смет...</div>
 <div class="tbtn " style="left:510px"></div>
 <svg class="abs" style="left:518px;top:6px" width="16" height="16" viewBox="0 0 16 16"><path d="M3.500 .5h9l3 3v12h-12z" fill="#fff" stroke="#446"/><rect x="0" y="3" width="10" height="9" fill="#2a4a9a"/><text x="1" y="10.500" font-family="Liberation Sans,sans-serif" font-weight="bold" font-size="8.500" fill="#fff">W</text></svg>
 <div class="t" style="left:538px;top:9px;color:#fff">Методы Ответы.do...</div>
 <div class="t" style="left:1134px;top:9px;color:#fff">RU</div>
 <div class="abs" id="tray" style="left:1169px;top:0;width:111px;height:30px"></div>
 <svg class="abs" style="left:1160px;top:5px" width="20" height="20" viewBox="0 0 20 20"><circle cx="10" cy="10" r="9.500" fill="#3a8ef0" stroke="#9ccaf8" stroke-width="1"/><path d="M12 5.500l-4.500 4.500 4.500 4.500" fill="none" stroke="#fff" stroke-width="2.200"/></svg>
 <svg class="abs" style="left:1182px;top:8px" width="14" height="14" viewBox="0 0 14 14"><rect x="1" y="1" width="8" height="7" fill="#dfe" stroke="#5a2"/><rect x="5" y="6" width="8" height="7" fill="#dfe" stroke="#5a2"/><rect x="0" y="9" width="4" height="4" fill="#cc2"/></svg>
 <div class="abs" style="left:1197px;top:9px;width:18px;height:12px;background:#e02020;color:#fff;font:bold 9px 'Liberation Sans',sans-serif;line-height:12px;text-align:center">ATI</div>
 <div class="abs" style="left:1216px;top:7px;width:17px;height:17px;background:#0a1a8a;color:#fff;font:bold 10px 'Liberation Sans',sans-serif;line-height:15px;padding-left:2px">Ru</div>
 <div class="t" style="left:1239px;top:9px;color:#fff">11:00</div>
 <div class="t" id="wm" style="left:1192px;top:12px">СМЕТ4UK.RU</div>
</div>
<!--TASKBAR-->
</body>
</html>
